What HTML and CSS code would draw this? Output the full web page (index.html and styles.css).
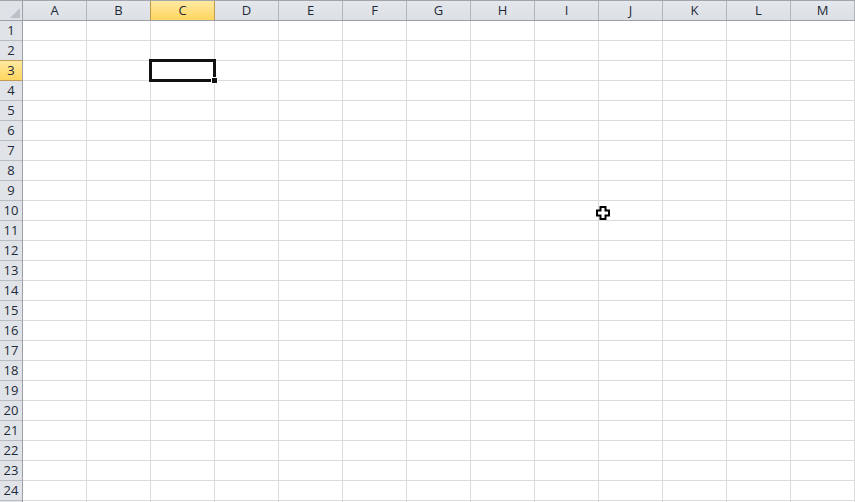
FILE: index.html
```html
<!DOCTYPE html>
<html>
<head>
<meta charset="utf-8">
<link rel="stylesheet" href="styles.css">
</head>
<body>
<div class="sheet">
  <div class="corner">
    <svg class="corner-tri" width="12" height="12" viewBox="0 0 12 12"><polygon points="11,1 11,11 1,11" fill="#bcc1c7"/></svg>
  </div>
  <div class="col-heads">
    <div class="ch">A</div><div class="ch">B</div><div class="ch sel">C</div><div class="ch">D</div><div class="ch">E</div><div class="ch">F</div><div class="ch">G</div><div class="ch">H</div><div class="ch">I</div><div class="ch">J</div><div class="ch">K</div><div class="ch">L</div><div class="ch">M</div>
  </div>
  <div class="row-heads">
    <div class="rh">1</div><div class="rh">2</div><div class="rh sel">3</div><div class="rh">4</div><div class="rh">5</div><div class="rh">6</div><div class="rh">7</div><div class="rh">8</div><div class="rh">9</div><div class="rh">10</div><div class="rh">11</div><div class="rh">12</div><div class="rh">13</div><div class="rh">14</div><div class="rh">15</div><div class="rh">16</div><div class="rh">17</div><div class="rh">18</div><div class="rh">19</div><div class="rh">20</div><div class="rh">21</div><div class="rh">22</div><div class="rh">23</div><div class="rh">24</div><div class="rh"></div>
  </div>
  <div class="cells">
    <div class="active"><div class="handle"></div></div>
    <svg class="cursor" width="14" height="14" viewBox="0 0 14 14">
      <polygon points="4.5,1 9.5,1 9.5,4.5 13,4.5 13,9.5 9.5,9.5 9.5,13 4.5,13 4.5,9.5 1,9.5 1,4.5 4.5,4.5" fill="#fff" stroke="#000" stroke-width="2"/>
    </svg>
  </div>
</div>
</body>
</html>
```
FILE: styles.css
```css
html, body {
  margin: 0;
  padding: 0;
  background: #fff;
  overflow: hidden;
}
.sheet {
  display: grid;
  grid-template-columns: 23px 832px;
  grid-template-rows: 21px 500px;
  width: 855px;
  height: 502px;
  overflow: hidden;
  font-family: "Open Sans", "Liberation Sans", sans-serif;
  font-size: 13px;
  color: #1e2a38;
}
.corner {
  position: relative;
  box-sizing: border-box;
  border-top: 1px solid #a3a7ab;
  border-right: 1px solid #9da1a6;
  border-bottom: 1px solid #9da1a6;
  background: #dfe3e8;
}
.corner-tri {
  position: absolute;
  right: 1px;
  bottom: 1px;
}
.col-heads {
  display: flex;
  box-sizing: border-box;
  border-top: 1px solid #a3a7ab;
  border-bottom: 1px solid #9da1a6;
}
.ch {
  flex: 0 0 64px;
  box-sizing: border-box;
  border-right: 1px solid #b1b5ba;
  background: linear-gradient(#e4e7eb, #dcdfe4);
  display: flex;
  align-items: center;
  justify-content: center;
  line-height: 1;
}
.ch.sel {
  background: linear-gradient(#ffe9a1, #ffd65f);
  border-left: 1px solid #c29a52;
  border-right: 1px solid #c29a52;
  margin-left: -1px;
  flex-basis: 65px;
}
.row-heads {
  display: flex;
  flex-direction: column;
  box-sizing: border-box;
  border-right: 1px solid #9da1a6;
}
.rh {
  flex: 0 0 20px;
  box-sizing: border-box;
  border-bottom: 1px solid #b9bdc2;
  background: #e0e3e8;
  display: flex;
  align-items: center;
  justify-content: center;
  line-height: 1;
}
.rh.sel {
  background: linear-gradient(#ffe9a1, #ffd65f);
  border-top: 1px solid #c29a52;
  border-bottom: 1px solid #c29a52;
  margin-top: -1px;
  flex-basis: 21px;
}
.cells {
  position: relative;
  background-image:
    linear-gradient(to right, transparent 63px, #d9dbdd 63px),
    linear-gradient(to bottom, transparent 19px, #d9dbdd 19px);
  background-size: 64px 100%, 100% 20px;
}
.active {
  position: absolute;
  left: 126px;
  top: 38px;
  width: 67px;
  height: 23px;
  box-sizing: border-box;
  border: 3px solid #111;
}
.handle {
  position: absolute;
  left: 59px;
  top: 15px;
  width: 5px;
  height: 5px;
  background: #111;
  border: 1px solid #fff;
}
.cursor {
  position: absolute;
  left: 573px;
  top: 185px;
}
```
